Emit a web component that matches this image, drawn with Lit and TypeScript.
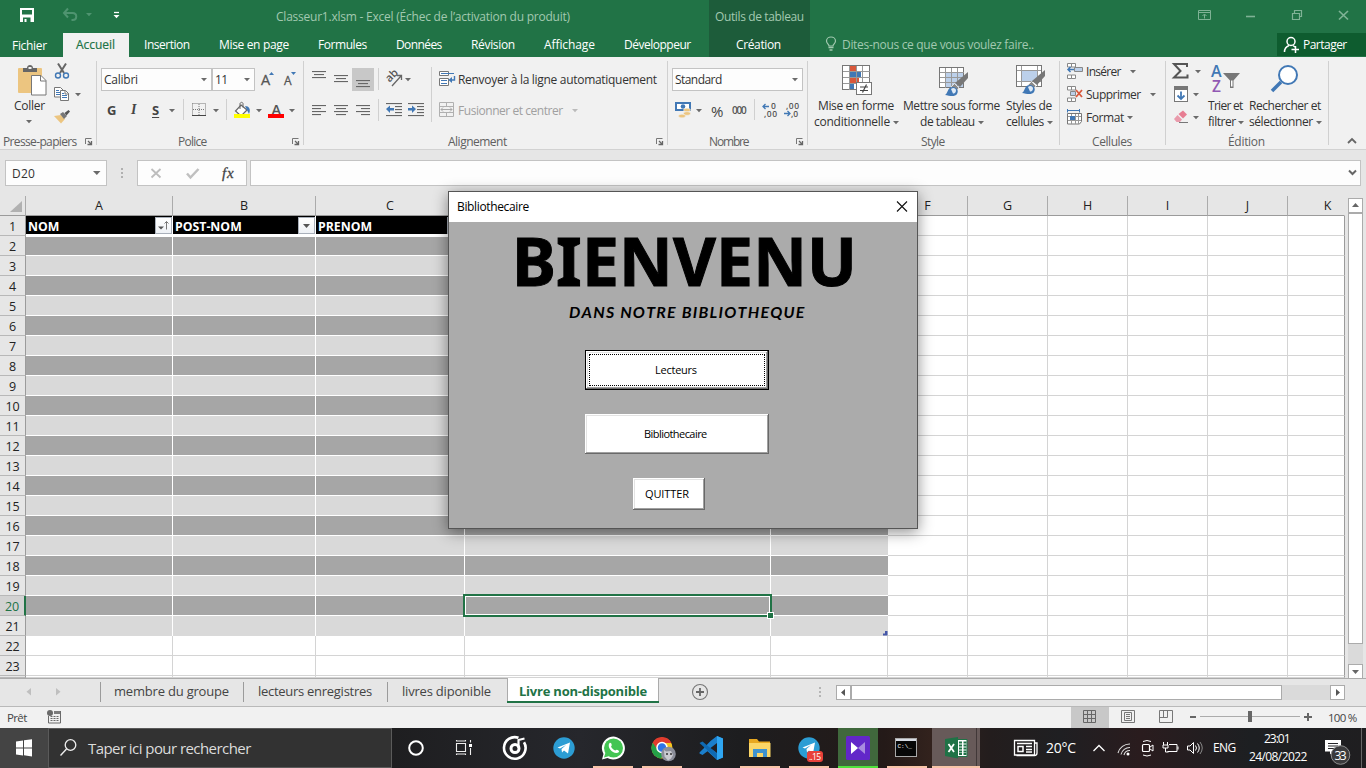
import { LitElement, html, svg, css, unsafeCSS, TemplateResult } from "lit";
import { customElement } from "lit/decorators.js";

type Item = { x: number; w: number; draw: (y: number, h: number) => unknown };
type Line = { y: number; h: number; items: Item[]; cls?: string };

/* Spacing scale: w = width, h = height, m = left gap, t = top gap */
const scale = Array.from(
  { length: 1120 },
  (_, n) => `.w${n}{width:${n}px}.m${n}{margin-left:${n}px}` + (n < 100 ? `.h${n}{height:${n}px;line-height:${n}px}.t${n}{margin-top:${n}px}` : "")
).join("");

const ic = (x: number, w: number, art: unknown): Item => ({
  x, w,
  draw: (y, h) => html`<svg width=${w} height=${h} viewBox="${x} ${y} ${w} ${h}">${art}</svg>`,
});
const tx = (x: number, w: number, text: string, cls = ""): Item => ({
  x, w, draw: () => html`<span class="t ${cls}" data-w=${w}>${text}</span>`,
});
const rowOf = (x0: number, l: Line) => {
  let x = x0;
  return l.items.map((i) => {
    const gap = i.x - x;
    x = i.x + i.w;
    return html`<div class="cell m${gap} w${i.w}">${i.draw(l.y, l.h)}</div>`;
  });
};
const column = (x0: number, y0: number, lines: Line[]) => {
  let y = y0;
  return lines.map((l) => {
    const gap = l.y - y;
    y = l.y + l.h;
    return html`<div class="row t${gap} h${l.h} ${l.cls ?? ""}">${rowOf(x0, l)}</div>`;
  });
};
const box = (x: number, w: number, cls: string, items: Item[]): Item => ({
  x, w, draw: (y, h) => html`<div class="row h${h} ${cls}">${rowOf(x, { y, h, items })}</div>`,
});
const stack = (x: number, w: number, lines: Line[]): Item => ({
  x, w, draw: (y) => html`<div>${column(x, y, lines)}</div>`,
});
const ln = (y: number, h: number, items: Item[], cls = ""): Line => ({ y, h, items, cls });
const arrow = (x: number, y: number, fill = "#6a6a6a") =>
  ic(x, 6, svg`<path d="M${x} ${y}h6l-3 3.2z" fill=${fill} />`);
const rule = (x: number, y: number, h: number) =>
  ic(x, 1, svg`<rect x=${x} y=${y} width="1" height=${h} fill="#d0d0d0" />`);
const bars = (x: number, w: number, list: number[][], c = "#666") =>
  list.map(([dx, y, len]) => svg`<rect x=${x + dx} y=${y} width=${len} height="1.1" fill=${c} />`);

const G = "#6a6a6a", B = "#4178b5", O = "#ecc580";

const brush = (x: number, y: number) => svg`
  <path d="M${x + 29} ${y}v6l-8 9-5-4z" fill="#777" />
  <path d="M${x + 15.5} ${y + 11.5}l4.5 4.5-3 3.5-5-4.5z" fill="#8a8a8a" stroke="#f1f1f1" stroke-width=".8" />
  <path d="M${x + 6} ${y + 23}c3-1 2-8 8-8 4 0 6 4 4 7-2 3-7 2-12 1z" fill=${B} />
  <path d="M${x + 12} ${y + 17}c2-2 5-1 5 1.500s-2 3-3 3z" fill="#dfeaf6" />`;
const sheetIcon = (x: number, y: number, w: number, h: number, cols: number, rows: number, extra: unknown) => svg`
  <rect x=${x + 0.5} y=${y + 0.5} width=${w} height=${h} fill="#fff" stroke="#777" />${extra}
  ${Array.from({ length: cols - 1 }, (_, i) => svg`<path d="M${Math.round(x + ((i + 1) * w) / cols) + 0.5} ${y + 1}v${h}" stroke="#999" />`)}
  ${Array.from({ length: rows - 1 }, (_, i) => svg`<path d="M${x + 1} ${Math.round(y + ((i + 1) * h) / rows) + 0.5}h${w}" stroke="#999" />`)}`;

const group = (x0: number, w: number, lines: Line[]) => html`
  <section class="group w${w - 1}">${column(x0, 57, lines)}</section><div class="sep"></div>`;

const labelLine = (label: string, lx: number, lw: number, right = 0): Line =>
  ln(133, 17, [
    tx(lx, lw, label, "muted"),
    ...(right ? [ic(right, 8, svg`<path d="M${right + 0.5} 144v-5.500h6" fill="none" stroke="#777" /><path d="M${right + 3} 141l3 3M${right + 6.500} 141v3.500h-4" stroke="#666" fill="none" stroke-width="1.300" />`)] : []),
  ]);

const G1: Line[] = [
  ln(60, 70, [
    stack(5, 48, [
      ln(62, 36, [ic(17, 30, svg`
        <rect x="18" y="68" width="24" height="25" rx="1" fill=${O} />
        <path d="M23 72v-4h4c0-4 6-4 6 0h4v4z" fill="#666" /><rect x="28.500" y="67" width="3" height="2" fill="#f1f1f1" />
        <path d="M31.500 75.500h9.500l5 5v14.500h-14.500z" fill="#fff" stroke="#777" /><path d="M40.500 75.500v5.500h5.500" fill="none" stroke="#777" />`)]),
      ln(98, 16, [tx(14, 31, "Coller")]),
      ln(116, 10, [arrow(26, 120)]),
    ]),
    stack(54, 30, [
      ln(60, 22, [ic(54, 16, svg`<path d="M58 63.500l6 9.500M66 63.500l-6 9.500" stroke="#666" stroke-width="2" /><circle cx="58" cy="75.500" r="2.500" fill="none" stroke=${B} stroke-width="1.400" /><circle cx="66" cy="75.500" r="2.500" fill="none" stroke=${B} stroke-width="1.400" />`)]),
      ln(84, 20, [ic(54, 16, svg`
        <path d="M54.500 87.500h6l3 3v6.500h-9z" fill="#fff" stroke="#777" />
        <path d="M56 90.500h3M56 92.500h4M56 94.500h4" stroke=${B} />
        <path d="M60.500 90.500h5l3 3v7h-8z" fill="#fff" stroke="#777" /><path d="M65 90.500v3.500h4" fill="none" stroke="#777" />
        <path d="M62 93.500h2M62 95.500h5M62 97.500h5" stroke=${B} />`), arrow(75, 93)]),
      ln(106, 22, [ic(54, 16, svg`<path d="M54 116l7-1 4 4-4 4.500z" fill=${O} /><path d="M60 114l3-2 4 4-3 3z" fill="#777" /><path d="M64.500 113l4-3 1.500 1.500-3.500 4z" fill="#555" />`)]),
    ]),
  ]),
  labelLine("Presse-papiers", 3, 74, 85),
];

const G2: Line[] = [
  ln(68, 23, [
    box(101, 111, "field", [tx(104, 34, "Calibri"), arrow(201, 78)]),
    box(212, 43, "field", [tx(215, 13, "11"), arrow(244, 78)]),
    ic(261, 14, svg`<text x="261" y="85" font-size="14.500" fill="#555" stroke="#555" stroke-width=".3">A</text><path d="M269 75l2.500-3 2.500 3z" fill=${B} />`),
    ic(284, 14, svg`<text x="284" y="85" font-size="12" fill="#555" stroke="#555" stroke-width=".3">A</text><path d="M291 72h5l-2.500 3z" fill=${B} />`),
  ]),
  ln(99, 22, [
    tx(107, 9, "G", "fmt bold"), tx(131, 6, "I", "fmt ital"), tx(152, 8, "S", "fmt bold under"),
    arrow(169, 109), rule(183, 99, 21),
    ic(192, 14, svg`<path d="M192.500 103.500h13v12M192.500 103.500v12M199 104v12M193 109.500h12" fill="none" stroke="#777" stroke-dasharray="1 1" /><path d="M192 115.500h14" stroke="#444" />`),
    arrow(213, 109), rule(226, 99, 21),
    ic(234, 16, svg`<path d="M241 105l6 5-6 6-5.500-5z" fill="#fff" stroke="#666" stroke-width="1.200" /><path d="M240 109v-5.500c1-2 3-1 3 0v4" fill="none" stroke="#666" /><path d="M245 106c4 0 6 3 4 8l-2-4z" fill=${B} /><rect x="234" y="114" width="16" height="4" fill="#ff0" />`),
    arrow(256, 109),
    ic(268, 16, svg`<text x="271.500" y="115" font-size="14.500" font-weight="600" fill="#555">A</text><rect x="268" y="114" width="16" height="4" fill="red" />`),
    arrow(289, 109),
  ]),
  labelLine("Police", 178, 29, 292),
];

const G3: Line[] = [
  ln(68, 54, [
    stack(312, 112, [
      ln(68, 23, [
        ic(312, 14, bars(312, 14, [[0, 71, 14], [2, 74, 10], [0, 77, 14]])),
        ic(334, 14, bars(334, 14, [[0, 75, 14], [2, 78, 10], [0, 81, 14]])),
        box(352, 22, "pressed", [ic(356, 14, bars(356, 14, [[0, 80, 14], [2, 83, 10], [0, 86, 14]]))]),
        rule(378, 68, 22),
        ic(386, 16, svg`<text x="388" y="81" font-size="11" font-weight="600" fill="#555" transform="rotate(-45 391 80)">ab</text><path d="M392 86l9-10M397 75.500h4.500v4.500" fill="none" stroke="#666" stroke-width="1.300" />`),
        arrow(405, 78),
      ]),
      ln(99, 22, [
        ic(312, 14, bars(312, 14, [[0, 105, 14], [0, 108, 9], [0, 111, 14], [0, 114, 9]])),
        ic(334, 14, bars(334, 14, [[0, 105, 14], [2, 108, 10], [0, 111, 14], [2, 114, 10]])),
        ic(356, 14, bars(356, 14, [[0, 105, 14], [5, 108, 9], [0, 111, 14], [5, 114, 9]])),
        rule(378, 99, 22),
        ic(386, 16, svg`${bars(386, 16, [[0, 103, 16], [9, 106, 7], [9, 109, 7], [9, 112, 7], [0, 115, 16]])}<path d="M386 109l4-3.500v2.500h4v2.500h-4v2.500z" fill=${B} />`),
        ic(408, 16, svg`${bars(408, 16, [[0, 103, 16], [9, 106, 7], [9, 109, 7], [9, 112, 7], [0, 115, 16]])}<path d="M416 109l-4-3.500v2.500h-4v2.500h4v2.500z" fill=${B} />`),
      ]),
    ]),
    rule(431, 67, 55),
    stack(439, 224, [
      ln(68, 23, [
        ic(439, 16, svg`<path d="M439.500 71.500h9v4h-9zM439.500 78.500h9v7h-9z" fill="#fff" stroke="#777" /><path d="M441 73.500h13M441 80.500h6M441 83.500h6" stroke=${B} stroke-width="1.200" /><path d="M454.500 76v4h-5" fill="none" stroke=${B} stroke-width="1.400" /><path d="M452 77l-3.500 3 3.500 3z" fill=${B} />`),
        tx(458, 199, "Renvoyer à la ligne automatiquement"),
      ]),
      ln(100, 22, [
        ic(439, 16, svg`<path d="M439.500 102.500h14v14h-14zM439.500 106.500h14M439.500 112.500h14M446.500 102.500v4M446.500 112.500v4" fill="none" stroke="#b0b0b0" /><path d="M441 109.500h11M443 107.500l-2 2 2 2M450 107.500l2 2-2 2" fill="none" stroke="#a8a8a8" />`),
        tx(458, 105, "Fusionner et centrer", "off"),
        arrow(572, 109, "#bbb"),
      ]),
    ]),
  ]),
  labelLine("Alignement", 448, 59, 656),
];

const G4: Line[] = [
  ln(68, 23, [box(672, 131, "field", [tx(675, 47, "Standard"), arrow(792, 78)])]),
  ln(99, 22, [
    ic(675, 16, svg`<path d="M676 103h14v7h-14z" fill="#fff" stroke=${B} stroke-width="2" /><circle cx="683" cy="106.500" r="2.300" fill=${B} /><ellipse cx="687" cy="110" rx="3.500" ry="1.800" fill=${O} stroke="#f1f1f1" stroke-width=".5" /><ellipse cx="687" cy="113.500" rx="3.500" ry="1.800" fill=${O} stroke="#f1f1f1" stroke-width=".5" /><ellipse cx="682" cy="116" rx="3.500" ry="1.800" fill=${O} stroke="#f1f1f1" stroke-width=".5" />`),
    arrow(696, 109), tx(711, 13, "%", "pct"), tx(732, 14, "000", "zero"), rule(754, 99, 21),
    ic(762, 16, svg`<path d="M763 106.500h6M765.500 104l-2.500 2.500 2.500 2.500" stroke=${B} stroke-width="1.300" fill="none" /><text x="771" y="108.500" font-size="8.500" class="num">0</text><text x="764" y="116.500" font-size="8.500" class="num" textLength="13">,00</text>`),
    ic(784, 16, svg`<text x="786" y="108.500" font-size="8.500" class="num" textLength="13">,00</text><path d="M784 113.500h6M787.500 111l2.500 2.500-2.500 2.500" stroke=${B} stroke-width="1.300" fill="none" /><text x="791" y="116.500" font-size="8.500" class="num" textLength="7">,0</text>`),
  ]),
  labelLine("Nombre", 709, 40, 796),
];

const G5: Line[] = [
  ln(63, 34, [
    ic(842, 30, svg`${sheetIcon(842, 65, 27, 24, 4, 4, svg`<path d="M850 66h6v5h-6zM850 78h9v5h-9z" fill="#d9583b" /><path d="M850 72h11v5h-11zM850 84h4v5h-4z" fill=${B} />`)}<rect x="856.500" y="82.500" width="15" height="12" fill="#fff" stroke="#777" /><path d="M860 87h8M860 90.500h8M866.500 84.500l-4 8" stroke="#444" stroke-width="1.200" />`),
    ic(939, 30, svg`${sheetIcon(939, 67, 24, 20, 4, 4, svg`<rect x="946" y="73" width="17" height="14" fill="#bcd0ea" />`)}${brush(939, 72)}`),
    ic(1016, 30, svg`${sheetIcon(1016, 65, 25, 21, 1, 1, svg`<path d="M1021.500 66v20M1037.500 66v20M1017 70.500h24M1017 81.500h24" stroke="#999" /><rect x="1022" y="71" width="15" height="10" fill="#bcd0ea" />`)}${brush(1016, 70)}`),
  ]),
  ln(98, 16, [tx(818, 76, "Mise en forme"), tx(903, 97, "Mettre sous forme"), tx(1006, 46, "Styles de")]),
  ln(114, 16, [tx(814, 76, "conditionnelle"), arrow(893, 121), tx(920, 55, "de tableau"), arrow(978, 121), tx(1006, 38, "cellules"), arrow(1047, 121)]),
  labelLine("Style", 921, 24),
];

const small = (y: number) => svg`<path d="M1067.500 ${y}h4v3.500h-4zM1071.500 ${y}h4v3.500h-4zM1067.500 ${y + 11.5}h4v3.500h-4zM1071.500 ${y + 11.5}h4v3.500h-4z" fill="#fff" stroke="#888" />`;
const G6: Line[] = [
  ln(60, 23, [
    ic(1067, 16, svg`${small(63.5)}<path d="M1074.500 67.500h8v4h-8z" fill="#bcd0ea" stroke="#888" /><path d="M1068 69.500h6M1070.500 67l-2.500 2.500 2.500 2.500" stroke=${B} stroke-width="1.500" fill="none" />`),
    tx(1086, 35, "Insérer"), arrow(1130, 70),
  ]),
  ln(83, 23, [
    ic(1067, 16, svg`${small(86.5)}<path d="M1070.500 91.500h5v4h-5z" fill="#bcd0ea" stroke="#888" /><path d="M1076 90l6 7M1082 90l-6 7" stroke="#d9583b" stroke-width="1.800" />`),
    tx(1086, 55, "Supprimer"), arrow(1150, 93),
  ]),
  ln(106, 23, [
    ic(1067, 16, svg`<path d="M1067.500 109v3.500M1079.500 109v3.500M1068 110.500h11" stroke=${B} /><path d="M1067.500 113.500h14v8l-2 2.500h-12z" fill="#fff" stroke="#777" /><path d="M1068 116.500h13M1068 120.500h13M1071.500 114v10M1075.500 114v10M1078.500 114v10" stroke="#999" /><rect x="1070" y="116" width="5" height="4" fill=${B} />`),
    tx(1086, 38, "Format"), arrow(1127, 116),
  ]),
  labelLine("Cellules", 1092, 40),
];

const G7: Line[] = [
  ln(60, 70, [
    stack(1173, 28, [
      ln(60, 23, [ic(1173, 16, svg`<path d="M1187 67v-3h-13l6.500 7-6.500 6.500h13.500v-3" fill="none" stroke="#555" stroke-width="2" />`), arrow(1195, 70)]),
      ln(83, 23, [ic(1174, 15, svg`<rect x="1174.500" y="86.500" width="13" height="15" fill="#fff" stroke="#777" /><rect x="1174" y="86" width="14" height="4" fill="#777" /><path d="M1181 91.500v7M1177.500 95.500l3.500 3.500 3.500-3.500" fill="none" stroke=${B} stroke-width="1.800" />`), arrow(1193, 93)]),
      ln(106, 23, [ic(1174, 15, svg`<path d="M1183 110.500l4 4-4 4-4.500-4.500z" fill="#e77d92" /><path d="M1177.500 115l4.500 4.500-2 2.500h-3.500l-2.500-3z" fill="#e99aab" /><path d="M1179 122.500h9" stroke="#777" />`), arrow(1193, 116)]),
    ]),
    stack(1206, 118, [
      ln(63, 34, [
        ic(1211, 30, svg`<text x="1211" y="77" font-size="16" font-weight="600" fill=${B}>A</text><text x="1212" y="92" font-size="15.500" font-weight="600" fill="#9159b3">Z</text><path d="M1223 73h17l-6.500 7.500v7.500h-3.500v-7.500z" fill="#777" /><path d="M1231 80.500h1.500v6h-1.500z" fill="#fff" />`),
        ic(1271, 28, svg`<path d="M1272 91l9-9" stroke=${B} stroke-width="3.600" /><circle cx="1288" cy="75" r="9" fill="#fff" stroke=${B} stroke-width="2" />`),
      ]),
      ln(98, 16, [tx(1208, 35, "Trier et"), tx(1249, 72, "Rechercher et")]),
      ln(114, 16, [tx(1208, 28, "filtrer"), arrow(1238, 121), tx(1249, 64, "sélectionner"), arrow(1316, 121)]),
    ]),
  ]),
  labelLine("Édition", 1228, 37),
];

const W = "#a2c9b0";
const TITLE: Line[] = [
  ln(0, 33, [
    ic(20, 14, svg`<path d="M20 8h14v14h-14z" fill="#fff" /><path d="M22 10h10v4.500h-10zM23 17.500h7.500v4.500h-7.500z" fill="#217346" /><path d="M24.500 19h2v3h-2z" fill="#fff" />`),
    ic(63, 15, svg`<path d="M68 8.500l-4 4.500 4 4.500M64.500 13h8c5 0 5 7 0 7h-1" fill="none" stroke="#4f9470" stroke-width="2" />`),
    arrow(86, 13, "#4f9470"),
    ic(113, 8, svg`<path d="M114 12.500h5" stroke="#fff" stroke-width="1.300" /><path d="M113.500 15h6l-3 3.200z" fill="#fff" />`),
    tx(276, 294, "Classeur1.xlsm - Excel (Échec de l’activation du produit)", "pale"),
    box(709, 101, "ctx", [tx(715, 89, "Outils de tableau", "pale")]),
    ic(1198, 14, svg`<path d="M1198.500 10.500h12v9h-12zM1198.500 12.500h12M1204.500 18.500v-4M1202.500 16l2-2 2 2" fill="none" stroke="#7fb295" />`),
    ic(1246, 9, svg`<path d="M1246 16.500h9" stroke="#7fb295" stroke-width="1.600" />`),
    ic(1292, 11, svg`<path d="M1292.500 13.500h7v6h-7zM1294.500 13v-2.500h7v6h-2" fill="none" stroke="#7fb295" stroke-width="1.200" />`),
    ic(1338, 11, svg`<path d="M1339 11l9 8.500M1348 11l-9 8.500" stroke="#7fb295" stroke-width="1.700" />`),
  ]),
  ln(33, 24, [
    tx(12, 35, "Fichier", "light low"),
    box(63, 66, "current", [tx(76, 39, "Accueil")]),
    tx(144, 46, "Insertion", "light"), tx(219, 70, "Mise en page", "light"), tx(318, 49, "Formules", "light"),
    tx(396, 46, "Données", "light"), tx(471, 44, "Révision", "light"), tx(544, 51, "Affichage", "light"), tx(624, 67, "Développeur", "light"),
    box(709, 101, "ctx", [tx(736, 45, "Création", "light")]),
    ic(826, 11, svg`<path d="M829 46c0-2-2.500-2.500-2.500-5a4.500 4 0 0 1 9 0c0 2.500-2.500 3-2.500 5z" fill="none" stroke=${W} stroke-width="1.200" /><path d="M828.500 47.500h5M829.500 50h3" stroke=${W} stroke-width="1.500" />`),
    tx(842, 192, "Dites-nous ce que vous voulez faire..", "pale"),
    box(1277, 89, "share", [
      ic(1284, 16, svg`<circle cx="1291" cy="41.500" r="4" fill="none" stroke="#fff" stroke-width="1.500" /><path d="M1284.500 52c0-3.500 2-5.500 4.500-6.500M1293 45.500l2 1.500M1291.500 49.500h7.500M1295.500 46v7" fill="none" stroke="#fff" stroke-width="1.500" />`),
      tx(1303, 44, "Partager", "light"),
    ]),
  ]),
];

const FORMULA: Line[] = [
  ln(160, 26, [
    box(5, 102, "field", [tx(12, 23, "D20", "low"), ic(93, 8, svg`<path d="M93 171h7.500l-3.700 4z" fill=${G} />`)]),
    ic(121, 3, svg`<path d="M121 168h2v2h-2zM121 172h2v2h-2zM121 176h2v2h-2z" fill="#b0b0b0" />`),
    box(137, 110, "field", [
      ic(151, 11, svg`<path d="M151.500 169l9 8.500M160.500 169l-9 8.500" stroke="#bdbdbd" stroke-width="1.800" />`),
      ic(186, 13, svg`<path d="M187 173.500l3.500 4 8-8.500" fill="none" stroke="#c0c0c0" stroke-width="2.500" />`),
      tx(222, 12, "fx", "fx"),
    ]),
    box(250, 1111, "field", [ic(1348, 9, svg`<path d="M1349 170.500l3.500 3.500 3.500-3.500" fill="none" stroke="#666" stroke-width="2" />`)]),
  ]),
];

const TABS: Line[] = [
  ln(679, 27, [
    ic(26, 6, svg`<path d="M31 688v7.500l-4.500-3.700z" fill="#bfbfbf" />`),
    ic(55, 6, svg`<path d="M56 688v7.500l4.500-3.700z" fill="#bfbfbf" />`),
    ic(100, 1, svg`<path d="M100.500 682v20" stroke="#9b9b9b" />`), tx(114, 115, "membre du groupe", "tab"),
    ic(243, 1, svg`<path d="M243.500 682v20" stroke="#9b9b9b" />`), tx(258, 114, "lecteurs enregistres", "tab"),
    ic(387, 1, svg`<path d="M387.500 682v20" stroke="#9b9b9b" />`), tx(402, 89, "livres diponible", "tab"),
    box(507, 152, "tabon", [tx(519, 128, "Livre non-disponible", "tab")]),
    ic(691, 18, svg`<circle cx="700" cy="692" r="7.500" fill="none" stroke="#777" stroke-width="1.100" /><path d="M696 692h8M700 688v8" stroke="#666" stroke-width="1.800" />`),
    ic(819, 3, svg`<path d="M819 687h2v2h-2zM819 691h2v2h-2zM819 695h2v2h-2z" fill="#b5b5b5" />`),
    ic(836, 509, svg`<rect x="836.500" y="685.500" width="508" height="14" fill="#dadada" stroke="#dadada" /><rect x="836.500" y="685.500" width="14" height="14" fill="#fff" stroke="#ababab" /><rect x="851.500" y="685.500" width="430" height="14" fill="#fff" stroke="#ababab" /><rect x="1330.500" y="685.500" width="14" height="14" fill="#fff" stroke="#ababab" /><path d="M845 689v7l-4-3.500zM1336 689v7l4-3.500z" fill="#555" />`),
  ]),
];

const STATUS: Line[] = [
  ln(707, 21, [
    tx(7, 20, "Prêt", "stat"),
    ic(47, 14, svg`<path d="M60.500 711v12h-12v-7" fill="none" stroke=${G} /><circle cx="50" cy="713" r="3" fill=${G} /><path d="M54 711h6v3h-6z" fill="#7c7c7c" /><path d="M50.500 716.500h8M50.500 718.500h8M50.500 720.500h8" stroke=${G} stroke-dasharray="2 1" />`),
    box(1071, 38, "pressed", [ic(1083, 14, svg`<path d="M1083.500 710.500h12v12h-12zM1083.500 714.500h12M1083.500 718.500h12M1087.500 710.500v12M1091.500 710.500v12" fill="none" stroke="#666" />`)]),
    ic(1121, 14, svg`<path d="M1121.500 710.500h13v12h-13zM1124.500 712.500h7v8h-7zM1126 714.500h4M1126 716.500h4M1126 718.500h4" fill="none" stroke="#777" />`),
    ic(1159, 14, svg`<path d="M1159.500 710.500h13v12h-13zM1159.500 717.500h8v-7M1163.500 710.500v7" fill="none" stroke="#777" />`),
    ic(1190, 7, svg`<path d="M1190 717h6" stroke="#666" stroke-width="2" />`),
    ic(1200, 100, svg`<path d="M1200 716.500h100" stroke="#ababab" /><rect x="1248" y="711" width="4" height="11" fill="#666" />`),
    ic(1304, 9, svg`<path d="M1304 717h8M1308 713v8" stroke="#666" stroke-width="2" />`),
    tx(1328, 29, "100 %", "stat"),
  ]),
];

const under = (x: number, w = 40, c = "#f8c4a8") => svg`<rect x=${x} y="766" width=${w} height="2" fill=${c} />`;
const plane = (cx: number) => svg`<circle cx=${cx} cy="748" r="10.700" fill="#2c9dd4" /><path d="M${cx - 6.5} 747.500l12.500-5-2 11-4-3-2 2-.500-3.500 4.500-4-6 3.500z" fill="#fff" />`;
const TASKBAR: Line[] = [
  ln(728, 40, [
    box(0, 48, "start", [ic(16, 17, svg`<path d="M16 741.500l7-1v7h-7zM24 740.300l8-1v8.200h-8zM16 748.500h7v7l-7-1zM24 748.500h8v8l-8-1.200z" fill="#fff" />`)]),
    box(48, 344, "search", [
      ic(60, 17, svg`<circle cx="70.500" cy="745" r="5.300" fill="none" stroke="#eee" stroke-width="1.300" /><path d="M66.500 749l-6 6.500" stroke="#eee" stroke-width="1.400" />`),
      tx(88, 163, "Taper ici pour rechercher", "srch"),
    ]),
    ic(406, 20, svg`<circle cx="416" cy="748" r="6.800" fill="none" stroke="#fff" stroke-width="2" />`),
    ic(455, 18, svg`<path d="M456.500 743.500h9v8h-9zM456.500 740v1h9v-1M456.500 755v-1h9v1M470.500 740v2.500M470.500 748v7" fill="none" stroke="#eee" stroke-width="1.100" /><rect x="469" y="744" width="3" height="3" fill="#fff" />`),
    ic(502, 26, svg`<path d="M518.500 737.800a10.800 10.800 0 1 0 5.500 4.500" fill="none" stroke="#fff" stroke-width="2.600" /><circle cx="515" cy="748.500" r="4" fill="none" stroke="#fff" stroke-width="3" /><path d="M518.500 748v-8l6-1.500" fill="none" stroke="#fff" stroke-width="2.200" />`),
    ic(552, 24, plane(564)),
    ic(593, 40, svg`<path d="M602 759.500l1.500-5.500a11.500 11.500 0 1 1 4 4z" fill="#fff" /><circle cx="613.500" cy="748" r="9.500" fill="#43c553" /><path d="M604 757.500l1.500-5 4 3.500z" fill="#43c553" /><path d="M609.500 743c2-1 3 3 1.500 3.500 1 2 2.500 3.500 4.500 4 1-2 4 0 3.500 1.500-4 4-13-4-9.500-9z" fill="#fff" />${under(593)}`),
    ic(642, 40, svg`<circle cx="662" cy="748" r="10.500" fill="#f7c51e" /><path d="M652.500 743a10.500 10.500 0 0 1 19 0h-9.500l-5 8z" fill="#e23b2e" /><path d="M652.800 742.800a10.500 10.500 0 0 0 8.200 15.700l5-8h-8z" fill="#24a148" /><circle cx="662" cy="747.500" r="5" fill="#2f75e8" stroke="#fff" stroke-width="1.500" /><circle cx="668.500" cy="754" r="7.300" fill="#8b8e99" /><path d="M664 750l2 1.500 5-.500 2 4-2 3.500-3 2-3.500-4z" fill="#c9cad0" /><circle cx="667" cy="754" r="1" fill="#333" /><circle cx="671" cy="754" r="1" fill="#333" />${under(642)}`),
    ic(699, 25, svg`<path d="M717 736l6 2.500v19l-6 2.500-9.500-8.800-5 3.800-3-1.500v-1l11-11.500z" fill="#1b7fcc" /><path d="M699.500 743l3-1.500 15 12.500v5.500z" fill="#0f6ab3" /><path d="M717 736l6 2.500v19l-6 2.500z" fill="#2fa6f2" /><path d="M717 743v10l-6.500-5zM699 744.500l5 3.500-5 4z" fill="#202024" />`),
    ic(740, 40, svg`<path d="M749 739h8l2 2.500h11v15h-21z" fill="#e8a820" /><path d="M749 743h21.500v14h-21.500z" fill="#fbd667" /><path d="M753 757v-8h14v8h-4v-4h-6v4z" fill="#3f93cf" />${under(740)}`),
    ic(789, 40, svg`${plane(809)}<rect x="807" y="751" width="16" height="11" rx="3" fill="#e8413a" /><text x="809" y="760" font-size="8.500" fill="#fff" textLength="12">..15</text>${under(789)}`),
    box(838, 40, "vid", [ic(838, 40, svg`<rect x="846" y="736" width="24" height="24" rx="1.500" fill="#6227c9" /><path d="M851 742v12l7-6z" fill="#fff" /><path d="M865 742v12l-7-6z" fill="#a98be0" />${under(838, 40, "#4fe23c")}`)]),
    ic(887, 40, svg`<rect x="895.500" y="738.500" width="21" height="18" fill="#070707" stroke="#a9a9a9" /><rect x="896" y="739" width="20" height="2" fill="#d8dce4" /><text x="897.500" y="748" font-size="6" fill="#fff" class="mono">C:\\_</text>${under(887)}`),
    box(932, 48, "xl", [ic(932, 48, svg`<path d="M957 739.500h10v17h-10z" fill="#fff" stroke="#1f7246" /><path d="M959 742.500h3M959 745.500h3M959 748.500h3M959 751.500h3M959 754h3M963.500 742.500h3M963.500 745.500h3M963.500 748.500h3M963.500 751.500h3M963.500 754h3" stroke="#1f7246" stroke-width="1.800" /><path d="M945 739l13-2v21.500l-13-2.500z" fill="#1f7246" /><path d="M948.500 744l5.500 8M954 744l-5.500 8" stroke="#fff" stroke-width="1.800" /><rect x="976" y="728" width="1" height="40" fill="#413838" />${under(932, 48)}`)]),
    ic(1014, 24, svg`<path d="M1014.500 740.500h20v14.500h-20zM1035 743h2v10c0 2-1 2.500-2.500 2.500h-18" fill="none" stroke="#fff" stroke-width="1.300" /><path d="M1017 743.500h15M1026 746.500h6M1026 749.500h6M1026 752h6" stroke="#fff" stroke-width="1.300" /><rect x="1018" y="746.500" width="5" height="5" fill="none" stroke="#fff" stroke-width="1.500" />`),
    tx(1046, 30, "20°C", "temp"),
    ic(1092, 14, svg`<path d="M1093.500 751l5.500-5.500 5.500 5.500" fill="none" stroke="#fff" stroke-width="1.300" />`),
    ic(1117, 14, svg`<path d="M1118 753a12 12 0 0 1 12-9M1121 754.500a9 9 0 0 1 9-7M1124 755a6 6 0 0 1 6-4.500" fill="none" stroke="#ddd" stroke-width="1.100" /><circle cx="1128" cy="754" r="1.500" fill="#fff" />`),
    ic(1140, 15, svg`<rect x="1142.500" y="744.500" width="7" height="7" rx="1" fill="none" stroke="#fff" stroke-width="1.200" /><path d="M1150 747l3-2v6l-3-2M1143 741.500q4-2 8 0M1143 755q4 2 8 0" fill="none" stroke="#fff" />`),
    ic(1162, 17, svg`<path d="M1169 744.500h8v7h-9.500" fill="none" stroke="#fff" /><path d="M1178 746.500v3M1163.500 742v3M1167.500 742v3M1163 745h5v3h-5zM1165.500 748v4h3" stroke="#fff" fill="none" />`),
    ic(1186, 17, svg`<path d="M1187.500 746v4h2.500l3.500 3.500v-11l-3.500 3.500z" fill="none" stroke="#fff" /><path d="M1195.500 745.500q2 2.500 0 5M1197.500 743.500q3.500 4.500 0 9" fill="none" stroke="#fff" /><path d="M1200 742q4.500 6 0 12" fill="none" stroke="#888" />`),
    tx(1213, 23, "ENG", "tray"),
    stack(1248, 60, [ln(729, 19, [tx(1264, 26, "23:01", "tray")]), ln(748, 18, [tx(1249, 58, "24/08/2022", "tray")])]),
    ic(1325, 27, svg`<path d="M1325 740h16v11.500h-8l-3 3v-3h-5z" fill="#fff" /><path d="M1328 743.500h10M1328 746h10M1328 748.500h6" stroke="#26262a" /><circle cx="1340.500" cy="755" r="9.300" fill="#3b3b3d" stroke="#8d8d8d" /><text x="1334.500" y="759.500" font-size="12" fill="#fff" textLength="12">33</text>`),
    ic(1361, 1, svg`<path d="M1361.500 728v40" stroke="#666" />`),
  ]),
];

@customElement("app-root")
export class AppRoot extends LitElement {
  static styles = [
    unsafeCSS(scale),
    css`
      :host { display: block; width: 1366px; height: 768px; overflow: hidden; position: relative; background: #e6e6e6;
        font-family: "Open Sans", "Noto Sans", sans-serif; font-size: 12px; color: #333; }
      .row { display: flex; align-items: stretch; white-space: nowrap; }
      .cell { flex: none; }
      svg { display: block; overflow: visible; }
      .t { display: block; white-space: pre; line-height: inherit; height: 100%; font-kerning: none; }
      .top { background: #217346; height: 57px; }
      .ctx { background: #1d5c3a; }
      .current { background: #f1f1f1; color: #217346; }
      .current .t { -webkit-text-stroke: 0.2px #217346; }
      .share { background: #0e5c2f; height: 23px; }
      .pale { color: #a2c9b0; }
      .light { color: #fff; }
      .low { padding-top: 1px; }
      .ribbon { height: 92px; background: #f1f1f1; border-bottom: 1px solid #d2d2d2; display: flex; }
      .group { flex: none; height: 92px; }
      .sep { width: 1px; height: 84px; margin-top: 4px; background: #d0d0d0; flex: none; }
      .collapse { margin-left: 18px; margin-top: 80px; }
      .muted { color: #606060; }
      .off { color: #a0a0a0; }
      .field { background: #fdfdfd; box-shadow: inset 0 0 0 1px #c3c3c3; }
      .pressed { background: #c8c8c8; }
      .fmt { font-size: 13px; color: #444; }
      .bold { font-weight: 700; }
      .ital { font-family: "Liberation Serif", serif; font-style: italic; font-weight: 700; font-size: 14px; }
      .under { text-decoration: underline; text-underline-offset: 2px; }
      .pct { font-size: 15px; color: #444; padding-top: 1px; }
      .zero { font-size: 10px; font-weight: 600; color: #555; }
      .num { fill: #555; font-weight: 600; }
      .mono { font-family: "Liberation Mono", monospace; }
      .fx { font-family: "Liberation Serif", serif; font-style: italic; font-size: 15px; color: #444; -webkit-text-stroke: 0.3px #444; }
      .bar { height: 40px; }
      .sheetwrap { display: flex; height: 488px; padding-top: 6px; box-sizing: border-box; position: relative; }
      .sheet { width: 1345px; height: 482px; display: grid; overflow: hidden; box-sizing: border-box;
        grid-template-columns: 26px 147px 143px 149px 306px 117px repeat(5, 80px) 57px;
        grid-template-rows: 20px repeat(23, 20px) 2px; }
      .sheet > div { box-sizing: border-box; border-right: 1px solid #d4d4d4; border-bottom: 1px solid #d4d4d4; background: #fff; }
      .sheet > .ch { background: #e6e6e6; border-right-color: #ababab; border-bottom-color: #9b9b9b; text-align: center; line-height: 19px; font-size: 12.5px; color: #222; }
      .sheet > .last { border-right-color: #9b9b9b; }
      .sheet > .ch.last { border-right-color: #e6e6e6; padding-left: 23px; }
      .sheet > .rh { background: #e6e6e6; border-right-color: #9b9b9b; border-bottom-color: #b8b8b8; text-align: center; line-height: 21px; font-size: 12.5px; color: #222; letter-spacing: -0.2px; }
      .sheet > .rh.on { background: #d2d2d2; color: #217346; border-right: 2px solid #217346; }
      .sheet > .dk { background: #a6a6a6; border-color: #fff; }
      .sheet > .lt { background: #d9d9d9; border-color: #fff; }
      .sheet > .hd { background: #000; border-color: #fff; color: #fff; font-weight: 700; font-size: 12.3px; line-height: 22px; padding-left: 2px;
        display: flex; justify-content: space-between; box-shadow: inset 0 -1px #fff; }
      .sheet > .first { border-top: 1px solid #fff; }
      .sheet > .edge { border-right: 0; }
      .sheet > .foot { border-bottom: 0; }
      .filter { width: 15px; height: 15px; margin: 1px 0 0; border: 1px solid #a9b0ba; background: linear-gradient(#fff, #eef1f5); }
      .vscroll { width: 15px; margin: 2px 0 0 3px; }
      .select { position: absolute; left: 463px; top: 404px; width: 305px; height: 19px; border: 2px solid #217346; box-shadow: inset 0 0 0 1px #fff; }
      .handle { position: absolute; left: 767px; top: 422px; width: 5px; height: 5px; background: #217346; border: 1px solid #fff; }
      .corner { position: absolute; left: 883px; top: 441px; }
      .tabs { border-top: 1px solid #ababab; height: 27px; border-bottom: 1px solid #b9b9b9; }
      .tab { font-size: 13px; color: #444; line-height: 25px; }
      .tabon { background: #fff; height: 25px; margin-top: -1px; border-bottom: 2px solid #217346; box-sizing: border-box; box-shadow: inset -1px 0 #ababab, inset 1px 0 #ababab; }
      .tabon .tab { color: #217346; font-weight: 700; line-height: 27px; }
      .status { height: 21px; background: #f1f1f1; }
      .stat { font-size: 11.5px; color: #444; }
      .task { height: 40px; background: linear-gradient(90deg, #1e1e20 392px, #26272c 580px, #1d1d1f 740px, #241a18 885px, #32221d 930px, #231d1d 990px, #1f1f22 1060px, #2a1c1e 1140px, #1d1f22 1250px, #1f1e20 1366px); color: #fff; }
      .start { background: #444; }
      .search { background: #323232; box-shadow: inset 0 0 0 1px #5a5a5a; }
      .srch { font-size: 15px; color: #dcdcdc; }
      .vid { background: #40683c; }
      .xl { background: #675a59; }
      .temp { font-size: 14px; }
      .tray { font-size: 12px; }
      .dialog { position: absolute; left: 448px; top: 191px; width: 468px; height: 336px; border: 1px solid #555; background: #ababab; color: #000;
        box-shadow: 0 3px 14px rgba(0, 0, 0, 0.45); }
      .caption { height: 30px; background: #fff; }
      .hero { font-family: "Noto Sans", "Open Sans", sans-serif; font-size: 66px; font-weight: 700; height: 76px; line-height: 76px; -webkit-text-stroke: 1px #000; }
      .sub { font-family: "Lato", sans-serif; font-style: italic; font-weight: 700; font-size: 16px; }
      .dlg { font-size: 11px; color: #000; }
      .cap { font-size: 12px; color: #000; }
      .btn { background: #fff; box-shadow: inset -1px -1px #696969, inset 1px 1px #fff, inset -2px -2px #a0a0a0, inset 2px 2px #e3e3e3; }
      .focus { box-shadow: inset 0 0 0 1px #000, inset -2px -2px #696969, inset 2px 2px #fff, inset -3px -3px #a0a0a0, inset 3px 3px #e3e3e3; position: relative; }
      .focus::after { content: ""; position: absolute; inset: 4px; border: 1px dotted #000; }
    `,
  ];

  firstUpdated() {
    /* Track every label so that it fills exactly the measure given for it */
    this.renderRoot.querySelectorAll<HTMLElement>(".t").forEach((el) => {
      const range = document.createRange();
      range.selectNodeContents(el);
      const n = (el.textContent ?? "").length;
      const target = Number(el.dataset.w);
      if (n > 1) el.style.letterSpacing = `${((target - range.getBoundingClientRect().width) / (n - 0.5)).toFixed(3)}px`;
    });
  }

  private sheet(): TemplateResult[] {
    const out: TemplateResult[] = [
      html`<div class="ch"><svg width="25" height="19" viewBox="0 196 25 19"><path d="M22 201v11h-12z" fill="#b1b1b1" /></svg></div>`,
    ];
    const letters = "ABCDEFGHIJK".split("");
    letters.forEach((l, i) => out.push(html`<div class="ch ${i === 10 ? "last" : ""}">${l}</div>`));
    const heads = ["NOM", "POST-NOM", "PRENOM", "", ""];
    for (let r = 1; r <= 24; r++) {
      out.push(html`<div class="rh ${r === 20 ? "on" : ""}">${r < 24 ? r : ""}</div>`);
      letters.forEach((_, c) => {
        const inTable = c < 5 && r < 22;
        const cls = (inTable ? (r === 1 ? "hd" : r % 2 ? "lt" : "dk") : "") + (inTable && r === 2 ? " first" : "") +
          (inTable && c === 4 ? " edge" : "") + (inTable && r === 21 ? " foot" : "") + (c === 10 ? " last" : "");
        out.push(html`<div class=${cls}>${inTable && r === 1 ? html`<span>${heads[c]}</span><span class="filter">${c === 0
          ? html`<svg width="15" height="15"><path d="M2 8.500h6l-3 3z" fill="#555" /><path d="M10.500 11.500v-8M8.500 5.500l2-2 2 2" fill="none" stroke="#777" /></svg>`
          : html`<svg width="15" height="15"><path d="M4 6h7l-3.500 4z" fill="#555" /></svg>`}</span>` : ""}</div>`);
      });
    }
    return out;
  }

  render() {
    const groups: [number, number, Line[]][] = [[0, 97, G1], [97, 207, G2], [304, 364, G3], [668, 140, G4], [808, 252, G5], [1060, 106, G6], [1166, 163, G7]];
    return html`
      <header class="top">${column(0, 0, TITLE)}</header>
      <div class="ribbon">
        ${groups.map(([x, w, lines]) => group(x, w, lines))}
        <svg class="collapse" width="10" height="8"><path d="M1 6l4-4 4 4" fill="none" stroke="#666" stroke-width="1.800" /></svg>
      </div>
      <div class="bar row"><div>${column(0, 150, FORMULA)}</div></div>
      <div class="sheetwrap">
        <div class="sheet">${this.sheet()}</div>
        <svg class="vscroll" width="15" height="481" viewBox="1348 198 15 481">
          <rect x="1348" y="198" width="15" height="481" fill="#dadada" />
          <rect x="1348.500" y="198.500" width="14" height="14" fill="#fff" stroke="#ababab" />
          <rect x="1348.500" y="213.500" width="14" height="430" fill="#fff" stroke="#ababab" />
          <rect x="1348.500" y="664.500" width="14" height="14" fill="#fff" stroke="#ababab" />
          <path d="M1352 207h7l-3.500-4zM1352 670h7l-3.500 4z" fill="#666" />
        </svg>
        <div class="select"></div>
        <div class="handle"></div>
        <svg class="corner" width="5" height="5"><path d="M0 2.500h2v-2.500h2.500v4.500h-4.500z" fill="#4557a8" /></svg>
      </div>
      <div class="tabs">${column(0, 679, TABS)}</div>
      <div class="status">${column(0, 707, STATUS)}</div>
      <footer class="task">${column(0, 728, TASKBAR)}</footer>
      <div class="dialog">
        <div class="caption">${column(449, 192, [
          ln(192, 30, [tx(457, 72, "Bibliothecaire", "cap"), ic(896, 12, svg`<path d="M897 201.500l10 10M907 201.500l-10 10" stroke="#111" stroke-width="1.100" />`)]),
        ])}</div>
        ${column(449, 222, [
          ln(222, 80, [tx(512, 345, "BIENVENU", "hero")]),
          ln(302, 20, [tx(569, 236, "DANS NOTRE BIBLIOTHEQUE", "sub")]),
          ln(350, 40, [box(585, 184, "btn focus", [tx(655, 42, "Lecteurs", "dlg")])]),
          ln(414, 40, [box(585, 184, "btn", [tx(644, 63, "Bibliothecaire", "dlg")])]),
          ln(478, 32, [box(633, 72, "btn", [tx(645, 44, "QUITTER", "dlg")])]),
        ])}
      </div>
    `;
  }
}
